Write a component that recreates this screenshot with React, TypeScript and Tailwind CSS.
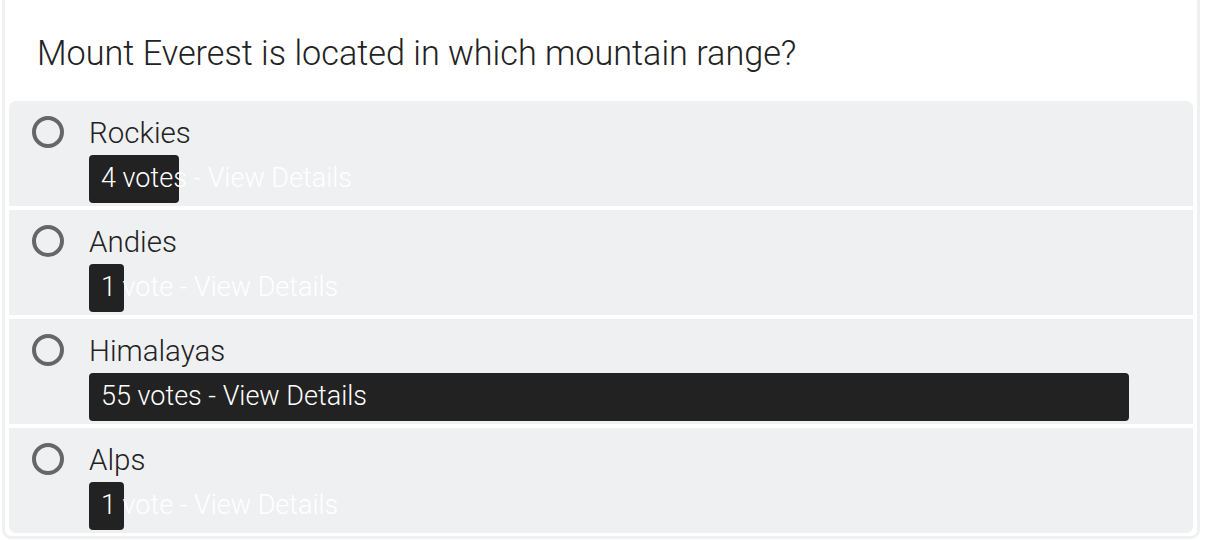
import React from "react";

const options = [
  { label: "Rockies", text: "4 votes - View Details", width: 90 },
  { label: "Andies", text: "1 vote - View Details", width: 35 },
  { label: "Himalayas", text: "55 votes - View Details", width: 1040 },
  { label: "Alps", text: "1 vote - View Details", width: 35 },
];

export default function App() {
  return (
    <div className="min-h-screen bg-white overflow-hidden font-light" style={{ fontFamily: 'Roboto, "Liberation Sans", Arial, sans-serif' }}>
      <div className="ml-[2px] mr-[6px] mt-[-8px] rounded-[9px] border-[3px] border-[#eef0f2] px-[4px] pb-[3px]">
        <div className="h-[106px] pl-[28px] pt-[38px] text-[34.2px] leading-[40px] text-[#222]">
          Mount Everest is located in which mountain range?
        </div>
        <div className="flex flex-col gap-[4px]">
          {options.map((o, i) => (
            <div
              key={o.label}
              className={
                "relative h-[105px] bg-[#eff0f2] " +
                (i === 0 ? "rounded-t-[7px] " : "") +
                (i === options.length - 1 ? "rounded-b-[7px]" : "")
              }
            >
              <div className="flex items-start pl-[23px] pt-[14px]">
                <div className="mt-[1px] h-[32px] w-[32px] rounded-full border-[4px] border-[#666]" />
                <div className="ml-[25px] mt-[1px] text-[29.5px] leading-[34px] text-[#222]">{o.label}</div>
              </div>
              <div className="ml-[80px] mt-[5px] h-[48px] rounded-[4px] bg-[#222]" style={{ width: o.width }}>
                <div className="whitespace-nowrap pl-[12px] text-[27px] leading-[46px] text-white">{o.text}</div>
              </div>
            </div>
          ))}
        </div>
      </div>
    </div>
  );
}
